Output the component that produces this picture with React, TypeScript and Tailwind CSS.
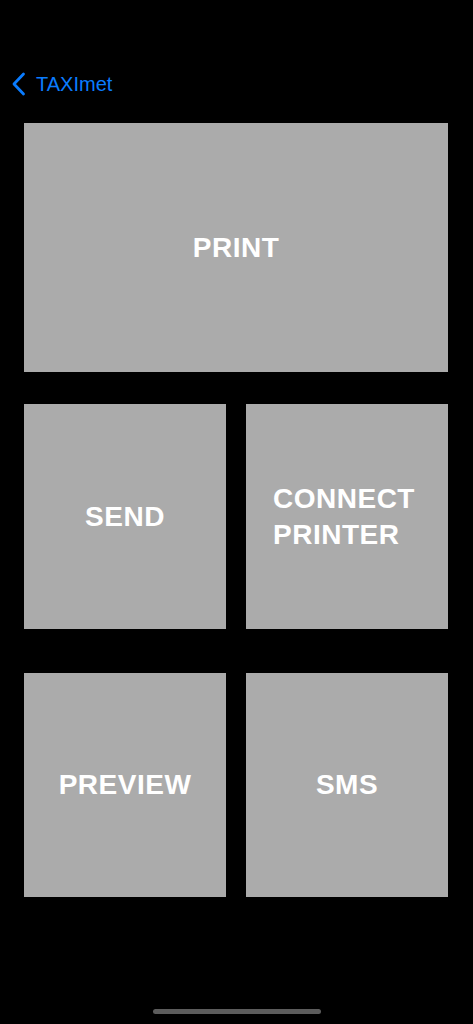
import React from "react";

function Tile({ children, className = "" }: { children: React.ReactNode; className?: string }) {
  return (
    <button
      className={`flex items-center justify-center bg-[#ababab] text-white font-bold text-[28px] leading-[36px] tracking-[0.5px] ${className}`}
      style={{ fontFamily: '"Liberation Sans", Arial, sans-serif' }}
    >
      {children}
    </button>
  );
}

export default function App() {
  return (
    <div
      className="w-[473px] h-[1024px] bg-black flex flex-col relative overflow-hidden"
      style={{ fontFamily: '"Liberation Sans", Arial, sans-serif' }}
    >
      <div className="h-[62px]" />
      <div className="flex items-center h-[44px] pl-[11px] text-[#0a7cff]">
        <svg width="16" height="24" viewBox="0 0 16 24" fill="none">
          <path d="M12.5 2 L3 12 L12.5 22" stroke="#0a7cff" strokeWidth="2.8" strokeLinecap="round" strokeLinejoin="round" />
        </svg>
        <span className="ml-[9px] text-[20px] leading-none">TAXImet</span>
      </div>
      <div className="flex flex-col pl-[24px] pr-[25px] pt-[17px]">
        <Tile className="h-[249px] w-full">PRINT</Tile>
        <div className="grid grid-cols-2 gap-[20px] mt-[32px] h-[225px]">
          <Tile>SEND</Tile>
          <Tile>
            <span className="text-left -ml-[6px]">
              CONNECT
              <br />
              PRINTER
            </span>
          </Tile>
        </div>
        <div className="grid grid-cols-2 gap-[20px] mt-[44px] h-[224px]">
          <Tile>PREVIEW</Tile>
          <Tile>SMS</Tile>
        </div>
      </div>
      <div className="absolute left-[153px] top-[1009px] w-[168px] h-[5px] rounded-full bg-[#5c5c5c]" />
    </div>
  );
}
